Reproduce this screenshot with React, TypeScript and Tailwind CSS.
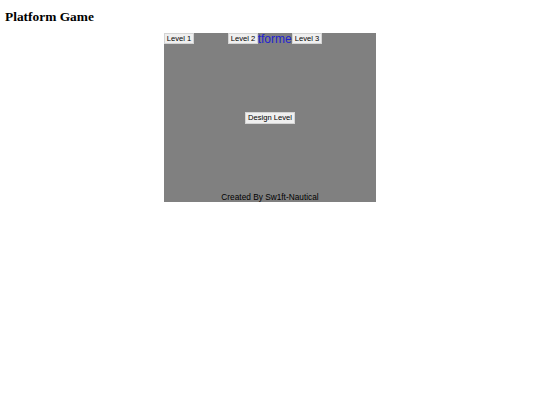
const btn =
  "w-[30px] h-[11px] bg-[#efefef] border border-[#d4d4d4] text-[7.6px] leading-[9px] text-black whitespace-nowrap";

export default function App() {
  return (
    <div className="w-[540px] h-[405px] bg-white">
      <h1 className="pl-[5px] pt-[9px] text-[13.4px] leading-[15px] font-bold text-black [font-family:'Liberation_Serif',serif]">
        Platform Game
      </h1>
      <div className="flex justify-center pt-[9px]">
        <div className="relative w-[212px] h-[169px] bg-[#808080] flex flex-col [font-family:'Liberation_Sans',Arial,sans-serif]">
          {/* title sits behind the level buttons */}
          <div className="absolute inset-x-0 top-0 pr-[4px] text-center text-[12px] leading-[13px] text-[#2222d2]">
            Platformer
          </div>
          <div className="relative flex gap-[34px]">
            <button className={btn}>Level 1</button>
            <button className={btn}>Level 2</button>
            <button className={btn}>Level 3</button>
          </div>
          <div className="flex-1 flex items-center justify-center">
            <button className="w-[50px] h-[12px] bg-[#efefef] border border-[#d4d4d4] text-[7.6px] leading-[10px] text-black whitespace-nowrap">
              Design Level
            </button>
          </div>
          <div className="text-center text-[8.3px] leading-[10px] text-black">Created By Sw1ft-Nautical</div>
        </div>
      </div>
    </div>
  );
}
